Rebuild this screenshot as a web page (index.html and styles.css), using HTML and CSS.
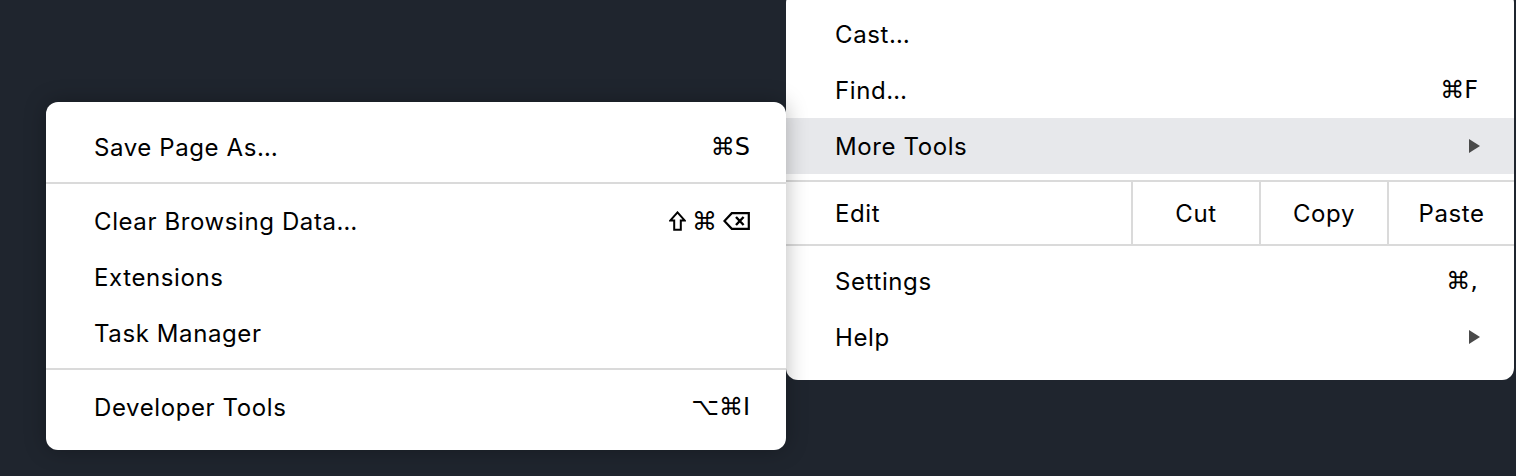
FILE: index.html
```html
<!DOCTYPE html>
<html>
<head>
<meta charset="utf-8">
<link rel="stylesheet" href="styles.css">
</head>
<body>
<div class="desk">
  <div class="menu menu-main">
    <div class="item"><span>Cast…</span></div>
    <div class="item"><span>Find…</span><span class="key">⌘F</span></div>
    <div class="item active"><span>More Tools</span><svg class="arrow" width="11" height="14" viewBox="0 0 11 14"><path d="M0 0 L11 7 L0 14 Z"/></svg></div>
    <div class="sep sep-top"></div>
    <div class="edit-row">
      <span class="edit-label">Edit</span>
      <span class="edit-btn">Cut</span>
      <span class="edit-btn">Copy</span>
      <span class="edit-btn">Paste</span>
    </div>
    <div class="sep sep-bottom"></div>
    <div class="item"><span>Settings</span><span class="key">⌘,</span></div>
    <div class="item"><span>Help</span><svg class="arrow" width="11" height="14" viewBox="0 0 11 14"><path d="M0 0 L11 7 L0 14 Z"/></svg></div>
  </div>
  <div class="menu menu-sub">
    <div class="item"><span>Save Page As…</span><span class="key">⌘S</span></div>
    <div class="sep"></div>
    <div class="item"><span>Clear Browsing Data…</span>
      <span class="key keys">
        <svg class="glyph" width="17" height="20" viewBox="0 0 17 20" aria-label="Shift"><path d="M8.5 1.4 L15.8 9.6 H11.8 V18.8 H5.2 V9.6 H1.2 Z" fill="none" stroke="#000" stroke-width="2" stroke-linejoin="miter"/></svg>
        <span class="cmd">⌘</span>
        <svg class="glyph" width="27" height="18" viewBox="0 0 27 18" aria-label="Delete"><path d="M8.8 1.2 H25.8 V16.8 H8.8 L1.4 9 Z" fill="none" stroke="#000" stroke-width="2.2" stroke-linejoin="miter"/><path d="M13 5 L20.6 13 M20.6 5 L13 13" stroke="#000" stroke-width="2.4"/></svg>
      </span>
    </div>
    <div class="item"><span>Extensions</span></div>
    <div class="item"><span>Task Manager</span></div>
    <div class="sep"></div>
    <div class="item"><span>Developer Tools</span><span class="key">⌥⌘I</span></div>
  </div>
</div>
</body>
</html>
```
FILE: styles.css
```css
html, body {
  margin: 0;
  padding: 0;
}
body {
  background: #1f252e;
  width: 1516px;
  height: 476px;
  overflow: hidden;
  font-family: Inter, "Liberation Sans", Arial, sans-serif;
  font-size: 24px;
  letter-spacing: 0.6px;
  color: #000;
}
.desk {
  position: relative;
  width: 1516px;
  height: 476px;
}
.menu {
  position: absolute;
  background: #fff;
  border-radius: 12px;
  display: flex;
  flex-direction: column;
  box-sizing: border-box;
}
.menu-main {
  left: 786px;
  top: -9px;
  width: 728px;
  padding: 15px 0 15px;
}
.menu-sub {
  left: 46px;
  top: 102px;
  width: 740px;
  padding: 17px 0 15px;
  box-shadow: 0 0 22px rgba(0, 0, 0, 0.28);
  z-index: 2;
}
.item {
  height: 56px;
  display: flex;
  align-items: center;
  justify-content: space-between;
  padding: 0 36px 0 48px;
}
.menu-main .item {
  padding-left: 49px;
}
.item.active {
  background: #e7e8eb;
}
.key {
  font-family: "DejaVu Sans", sans-serif;
  font-size: 24px;
  letter-spacing: 0;
  color: #000;
}
.keys {
  display: flex;
  align-items: center;
  gap: 6px;
}
.cmd {
  font-size: 25px;
}
.glyph {
  display: block;
}
.arrow {
  fill: #4a4a4a;
  margin-right: -2px;
}
.sep {
  height: 2px;
  background: #dadada;
  margin: 7px 0 9px;
}
.menu-main .sep-top {
  margin: 6px 0 0;
}
.menu-main .sep-bottom {
  margin: 0 0 7px;
}
.edit-row {
  display: flex;
  height: 62px;
  align-items: stretch;
}
.edit-label {
  flex: 1;
  display: flex;
  align-items: center;
  padding-left: 49px;
}
.edit-btn {
  width: 126px;
  border-left: 2px solid #dadada;
  display: flex;
  align-items: center;
  justify-content: center;
}
.edit-btn:last-child {
  width: 125px;
}
```
